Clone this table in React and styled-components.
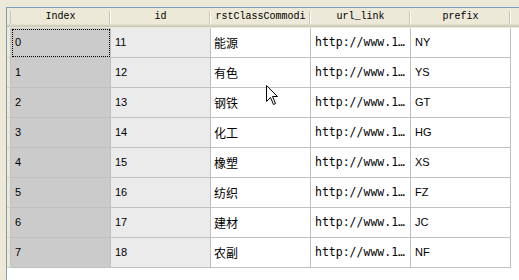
import React from "react";
import styled, { createGlobalStyle } from "styled-components";

const Global = createGlobalStyle`
  html, body {
    margin: 0;
    padding: 0;
    background: #ece9d8;
    overflow: hidden;
  }
`;

const Frame = styled.div`
  position: relative;
  margin: 7px 0 0 6px;
  height: calc(100vh - 7px);
  border-top: 1px solid #7f9db9;
  border-left: 1px solid #7f9db9;
  background: #ffffff;
  box-sizing: border-box;
`;

const HeaderRow = styled.div`
  display: flex;
  height: 20px;
  background: linear-gradient(
    to bottom,
    #ece9d8 0,
    #ece9d8 16px,
    #e2decd 16px,
    #e2decd 17px,
    #d6d2c2 17px,
    #d6d2c2 18px,
    #cbc7b8 18px,
    #cbc7b8 19px,
    #ece9d8 19px
  );
`;

const Corner = styled.div`
  position: relative;
  width: 4px;
  flex-shrink: 0;
  &::after {
    content: "";
    position: absolute;
    right: 0;
    top: 3px;
    bottom: 4px;
    width: 1px;
    background: #cbc7b8;
  }
`;

const HeadCell = styled.div`
  position: relative;
  width: 100px;
  flex-shrink: 0;
  display: flex;
  align-items: center;
  padding-bottom: 3px;
  box-sizing: border-box;
  &::after {
    content: "";
    position: absolute;
    right: 0;
    top: 3px;
    bottom: 4px;
    width: 1px;
    background: #cbc7b8;
    border-right: 1px solid #ffffff;
  }
`;

const HeadClip = styled.div`
  flex: 1;
  margin: 0 5px 0 4px;
  overflow: hidden;
  display: flex;
  justify-content: center;
  white-space: nowrap;
  font-family: "Liberation Mono", monospace;
  font-size: 10px;
  color: #000;
`;

const HeadFill = styled.div`
  flex: 1;
`;

const Row = styled.div`
  display: flex;
  height: 30px;
`;

const RowHead = styled.div`
  width: 3px;
  flex-shrink: 0;
  background: #ece9d8;
  border-right: 1px solid #c8c4b4;
  border-bottom: 1px solid #d6d2c2;
`;

const backgrounds = { index: "#cbcbcb", id: "#ebebeb", plain: "#ffffff" };

const Cell = styled.div`
  width: 100px;
  flex-shrink: 0;
  box-sizing: border-box;
  display: flex;
  align-items: center;
  padding: 0 4px 1px ${(p) => (p.$tight ? "3px" : "4px")};
  background: ${(p) => backgrounds[p.$bg || "plain"]};
  border-right: 1px solid #c0c0c0;
  border-bottom: 1px solid #c0c0c0;
  outline: ${(p) => (p.$focus ? "1px dotted #000" : "none")};
  outline-offset: -2px;
  color: #000;
  font-family: ${(p) =>
    p.$mono
      ? '"DejaVu Sans Mono", monospace'
      : p.$cjk
      ? '"Noto Sans CJK SC", sans-serif'
      : '"Liberation Sans", sans-serif'};
  font-size: ${(p) => (p.$mono ? "11.5px" : p.$cjk ? "12px" : "11px")};
  white-space: nowrap;
  overflow: hidden;
`;

const Ellipsis = styled.span`
  overflow: hidden;
  text-overflow: ellipsis;
  white-space: nowrap;
`;

const Pointer = styled.svg`
  position: absolute;
  left: 259px;
  top: 77px;
`;

const rows = [
  ["0", "11", "能源", "NY"],
  ["1", "12", "有色", "YS"],
  ["2", "13", "钢铁", "GT"],
  ["3", "14", "化工", "HG"],
  ["4", "15", "橡塑", "XS"],
  ["5", "16", "纺织", "FZ"],
  ["6", "17", "建材", "JC"],
  ["7", "18", "农副", "NF"],
];

const headers = ["Index", "id", "firstClassCommodity", "url_link", "prefix"];

export default function App() {
  return (
    <>
      <Global />
      <Frame>
        <HeaderRow>
          <Corner />
          {headers.map((h) => (
            <HeadCell key={h}>
              <HeadClip>{h}</HeadClip>
            </HeadCell>
          ))}
          <HeadFill />
        </HeaderRow>
        {rows.map(([idx, id, name, prefix], i) => (
          <Row key={idx}>
            <RowHead />
            <Cell $bg="index" $focus={i === 0}>
              {idx}
            </Cell>
            <Cell $bg="id">{id}</Cell>
            <Cell $cjk $tight>
              {name}
            </Cell>
            <Cell $mono>
              <Ellipsis>http://www.100ppi.com/sf/</Ellipsis>
            </Cell>
            <Cell>{prefix}</Cell>
          </Row>
        ))}
        <Pointer width="13" height="21" viewBox="0 0 13 21">
          <path
            d="M0.5 0.5 L0.5 16.5 L4.5 12.5 L7.5 19.5 L9.5 18.5 L6.5 11.5 L11.5 11.5 Z"
            fill="#fff"
            stroke="#000"
            strokeWidth="1"
          />
        </Pointer>
      </Frame>
    </>
  );
}
